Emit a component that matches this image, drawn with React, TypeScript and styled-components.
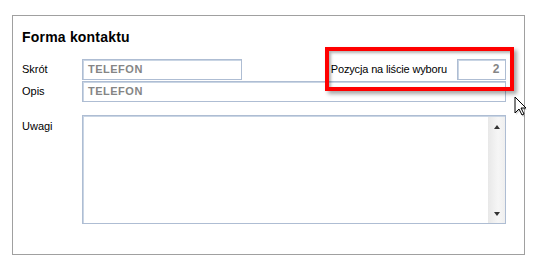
import React from 'react';
import styled, { createGlobalStyle } from 'styled-components';

const GlobalStyle = createGlobalStyle`
  html, body {
    margin: 0;
    padding: 0;
    background: #ffffff;
  }
  body {
    font-family: "Liberation Sans", Arial, sans-serif;
    color: #000000;
  }
`;

const Page = styled.div`
  position: relative;
  width: 535px;
  height: 275px;
  padding: 15px 10px 0 12px;
  box-sizing: border-box;
`;

const Panel = styled.section`
  width: 513px;
  height: 240px;
  box-sizing: border-box;
  border: 1px solid #a0a0a0;
  padding: 13px 18px 0 9px;
`;

const Title = styled.h2`
  margin: 0 0 14px;
  font-size: 14px;
  line-height: 16px;
  font-weight: 700;
  letter-spacing: 0.2px;
`;

const Form = styled.div`
  display: grid;
  grid-template-columns: 60px 1fr;
  grid-template-rows: 21px 21px 109px;
  row-gap: 1px;
`;

const Label = styled.div<{ $top?: boolean }>`
  font-size: 11px;
  line-height: 21px;
  align-self: ${(p) => (p.$top ? 'start' : 'center')};
  margin-top: ${(p) => (p.$top ? '13px' : '0')};
`;

const Line = styled.div`
  display: flex;
  align-items: center;
`;

const Field = styled.div<{ $width?: number; $align?: 'left' | 'right'; $big?: boolean }>`
  width: ${(p) => (p.$width ? `${p.$width}px` : 'auto')};
  flex: ${(p) => (p.$width ? 'none' : '1')};
  height: 21px;
  box-sizing: border-box;
  border: 1px solid #aebdd3;
  box-shadow: inset 1px 1px 0 #c9d5e4;
  padding: 0 5px;
  font-size: ${(p) => (p.$big ? '12px' : '11px')};
  font-weight: 700;
  letter-spacing: 0.5px;
  line-height: 19px;
  color: #858585;
  text-align: ${(p) => p.$align ?? 'left'};
  background: #ffffff;
`;

const SideLabel = styled.div`
  margin-left: auto;
  margin-right: 10px;
  font-size: 11px;
  line-height: 21px;
  letter-spacing: -0.15px;
`;

const Memo = styled.div`
  grid-column: 2;
  margin-top: 12px;
  height: 109px;
  box-sizing: border-box;
  border: 1px solid #aebdd3;
  box-shadow: inset 1px 1px 0 #c9d5e4;
  display: flex;
  justify-content: flex-end;
  background: #ffffff;
`;

const ScrollBar = styled.div`
  width: 17px;
  margin: 1px 0 0;
  background: linear-gradient(to right, #e8e8e8, #f6f6f6 60%, #efefef);
  display: flex;
  flex-direction: column;
  justify-content: space-between;
  align-items: center;
  padding: 8px 0 7px;
  box-sizing: border-box;
`;

const Arrow = styled.span<{ $down?: boolean }>`
  width: 0;
  height: 0;
  border-left: 3.5px solid transparent;
  border-right: 3.5px solid transparent;
  ${(p) => (p.$down ? 'border-top: 4px solid #333;' : 'border-bottom: 4px solid #333;')}
`;

const Highlight = styled.div`
  position: absolute;
  left: 325px;
  top: 47px;
  width: 189px;
  height: 44px;
  box-sizing: border-box;
  border: 4px solid #ff0000;
  box-shadow: 3px 3px 4px rgba(0, 0, 0, 0.35), inset 2px 2px 3px rgba(0, 0, 0, 0.3);
  pointer-events: none;
`;

const Cursor = styled.svg`
  position: absolute;
  left: 514px;
  top: 96px;
`;

export default function App() {
  return (
    <Page>
      <GlobalStyle />
      <Panel>
        <Title>Forma kontaktu</Title>
        <Form>
          <Label>Skrót</Label>
          <Line>
            <Field $width={160}>TELEFON</Field>
            <SideLabel>Pozycja na liście wyboru</SideLabel>
            <Field $width={49} $align="right" $big>
              2
            </Field>
          </Line>
          <Label>Opis</Label>
          <Field>TELEFON</Field>
          <Label $top>Uwagi</Label>
          <Memo>
            <ScrollBar>
              <Arrow />
              <Arrow $down />
            </ScrollBar>
          </Memo>
        </Form>
      </Panel>
      <Highlight />
      <Cursor width="16" height="24" viewBox="0 0 16 24">
        <path d="M2 2 L2 19 L6 15 L9 21 L11 20 L8 14 L13 14 Z" fill="rgba(0,0,0,0.15)" />
        <path d="M1 1 L1 17 L5 13 L8 19 L10 18 L7 12 L12 12 Z" fill="#ffffff" stroke="#000000" strokeWidth="1" strokeLinejoin="miter" />
      </Cursor>
    </Page>
  );
}
